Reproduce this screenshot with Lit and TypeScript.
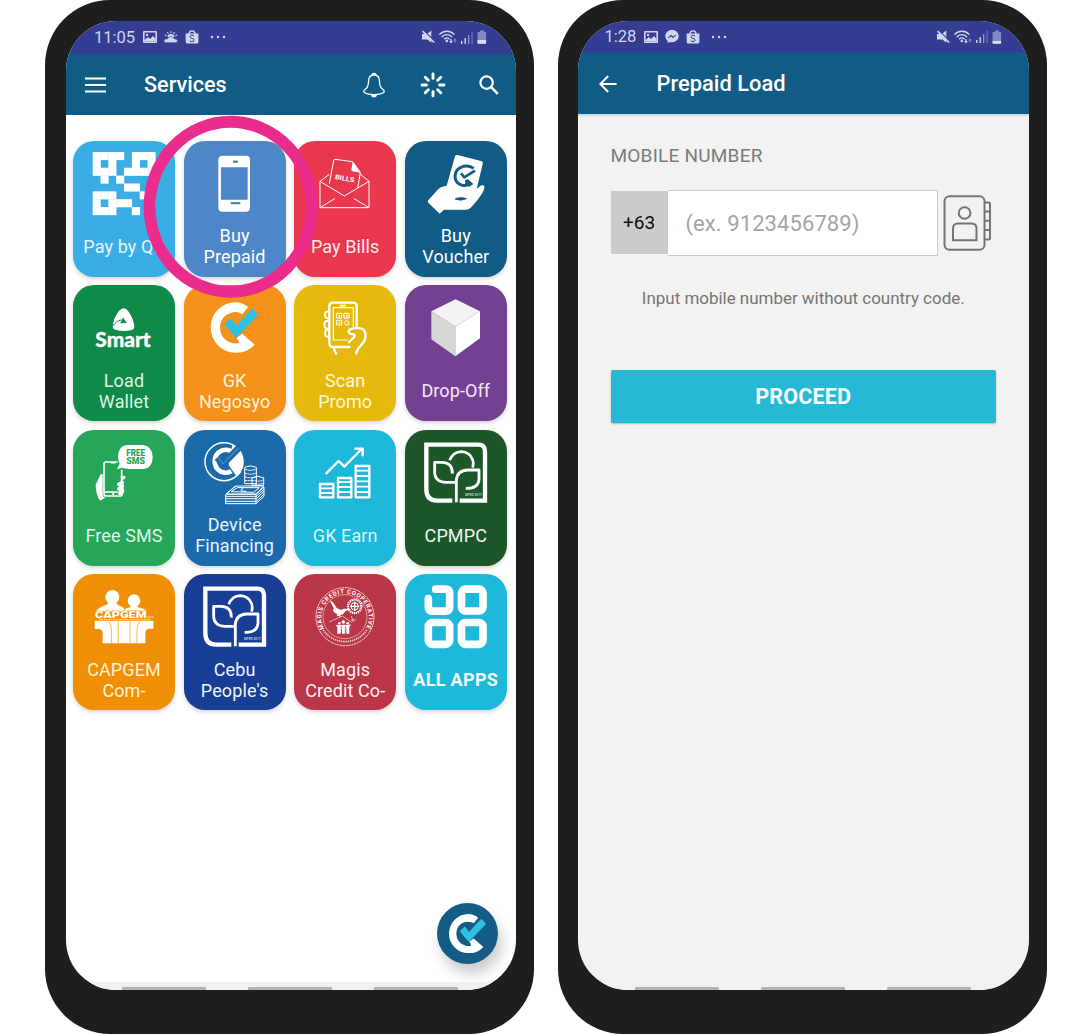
import { LitElement, html, css, svg } from "lit";
import { customElement, property } from "lit/decorators.js";

/* ---------- status bar glyphs ---------- */
const pictureIcon = html`<svg width="14" height="12" viewBox="0 0 14 12">
  <path fill="#d3d5ee" fill-rule="evenodd" d="M1 0h12q1 0 1 1v10q0 1-1 1H1q-1 0-1-1V1q0-1 1-1zM1.600 1.600v8.800h10.800V1.600z"/>
  <path fill="#d3d5ee" d="M1.500 10.500V9L5 6l2 2 3-3 2.500 2.800v2.700z"/><circle cx="4" cy="3.900" r="1.200" fill="#d3d5ee"/></svg>`;
const weatherIcon = html`<svg width="14" height="12" viewBox="0 0 14 12">
  <g stroke="#d3d5ee" stroke-width="1.100" stroke-linecap="round"><path d="M7 .6v1M3.600 1.500l.6 1M10.400 1.500l-.6 1M1.200 4l1 .6M12.800 4l-1 .6"/></g>
  <path d="M3.500 6a3.500 3 0 0 1 7 0" fill="#d3d5ee"/>
  <path fill="#d3d5ee" stroke="#343d92" stroke-width=".6" d="M1.700 11.700a1.900 1.900 0 0 1 .3-3.800h1.500a3.600 3.400 0 0 1 6.800-.1l1.600.2a1.900 1.900 0 0 1 .2 3.700z"/></svg>`;
const messengerIcon = html`<svg width="14" height="13" viewBox="0 0 14 13">
  <path fill="#d3d5ee" d="M7 0c3.900 0 6.700 2.700 6.700 6.100S10.900 12.200 7 12.200c-.7 0-1.400 0-2-.3L2.600 13v-2.200A5.800 5.800 0 0 1 .3 6.100C.3 2.700 3.100 0 7 0z"/>
  <path d="M3 8l2.900-3 2.200 1.700L11 5 8.200 7.900 6 6.300z" fill="#343d92" stroke="#343d92" stroke-width=".6"/></svg>`;
const bagIcon = html`<svg width="14" height="14" viewBox="0 0 14 14">
  <path d="M4 4a3 3.200 0 0 1 6 0" fill="none" stroke="#d3d5ee" stroke-width="1.300"/>
  <path fill="#d3d5ee" d="M.6 3.500h12.800V12q0 1.500-1.500 1.500H2.200Q.7 13.500.7 12z"/>
  <path d="M9 6.100Q8 5.200 6.800 5.200q-1.700 0-1.700 1.500T7 8.400t2 1.600-2 1.600q-1.200 0-2.200-.9" fill="none" stroke="#343d92" stroke-width="1"/></svg>`;
const dotsIcon = html`<svg width="16" height="4" viewBox="0 0 16 4"><g fill="#d3d5ee"><circle cx="2" cy="2" r="1.250"/><circle cx="8" cy="2" r="1.250"/><circle cx="14" cy="2" r="1.250"/></g></svg>`;
const muteIcon = html`<svg width="13" height="14" viewBox="0 0 13 14">
  <path fill="#d3d5ee" d="M0 4h3l3-1L9.300.4V12.800L5.500 9.500H0z"/><path d="M1.500.4l11.500 11" stroke="#343d92" stroke-width="1.300"/>
  <path d="M.6 1.200l11.600 11.300" stroke="#d3d5ee" stroke-width="1.700"/></svg>`;
const wifiIcon = html`<svg width="18" height="14" viewBox="0 0 18 14">
  <g fill="none" stroke="#d3d5ee" stroke-width="1.300" stroke-linecap="round"><path d="M.8 4.200a10 10 0 0 1 14.200 0M3.100 6.700a6.600 6.600 0 0 1 9.600 0M5.400 8.900a3.800 3.800 0 0 1 5 0"/></g>
  <circle cx="7.800" cy="10.900" r="1.300" fill="#d3d5ee"/>
  <path fill="#d3d5ee" d="M11.300 9h1.300v2h1.200L12 13.400 10.100 11h1.200z"/><path fill="#8186c2" d="M15.300 12.500h1.300v-2h1.200L16 8.100 14.100 10.500h1.200z"/></svg>`;
const signalIcon = html`<svg width="12" height="13" viewBox="0 0 12 13">
  <path fill="#d3d5ee" d="M0 10h1.400v3H0zM3.500 7h1.400v6H3.500z"/><path fill="#9095cb" d="M7 4h1.300v9H7z"/><path fill="#6f75b9" d="M10.500.5h1.200V13h-1.200z"/></svg>`;
const batteryIcon = (level: number) => html`<svg width="10" height="14" viewBox="0 0 10 14">
  <path fill="#8388c6" d="M3 .4h4v1.500h1.200q.9 0 .9.900V13q0 .8-.9.800H1.400q-.9 0-.9-.8V2.800q0-.9.900-.9H3z"/>
  <path fill="#dcddf2" d=${`M.5 ${14 - level}h8.600V13q0 .8-.9.800H1.400q-.9 0-.9-.8z`}/></svg>`;

/* ---------- header glyphs ---------- */
const menuIcon = html`<svg width="21" height="16" viewBox="0 0 21 16"><path stroke="#fff" stroke-width="2" d="M0 1.500h21M0 8h21M0 14.500h21"/></svg>`;
const bellIcon = html`<svg width="22" height="26" viewBox="0 0 22 26">
  <path d="M11 3C7 3 5.500 6 5.500 9.500c0 5-1.200 6.500-3.500 8-1.500 1-1.600 2.400-.2 3.300C3.500 21.900 7 22.600 11 22.600s7.500-.7 9.200-1.800c1.400-.9 1.300-2.300-.2-3.300-2.300-1.500-3.500-3-3.500-8C16.500 6 15 3 11 3z" fill="none" stroke="#fff" stroke-width="1.300"/>
  <path fill="#fff" d="M8.300 3.300Q8.300.8 11 .8t2.700 2.500Q11 2.400 8.300 3.300zM7.900 22.500h6.200Q13.800 25.400 11 25.400t-3.100-2.900z"/></svg>`;
const spinnerIcon = html`<svg class="spinner" width="26" height="26" viewBox="-13 -13 26 26"><g stroke="#fff" stroke-width="2.900" stroke-linecap="round">
  ${[0, 45, 90, 135, 180, 225, 270, 315].map((a) => svg`<path d="M0-6.600V-11" transform=${`rotate(${a})`}/>`)}</g></svg>`;
const searchIcon = html`<svg width="20" height="20" viewBox="0 0 20 20"><circle cx="7.600" cy="7.600" r="6.200" fill="none" stroke="#fff" stroke-width="2.200"/><path d="M12.200 12.200l6.600 6.600" stroke="#fff" stroke-width="2.600"/></svg>`;
const backIcon = html`<svg width="18" height="18" viewBox="0 0 18 18"><path d="M9.200 1L1.400 9l7.800 8M1.400 9H17.600" fill="none" stroke="#fff" stroke-width="2"/></svg>`;

/* ---------- service artwork, drawn at three units per pixel ---------- */
const art = (x: number, y: number, body: unknown) =>
  html`<svg class="art" width="102" height="80" viewBox=${`${x} ${y} 306 240`}>${body}</svg>`;

const qrCells = ["####.###", "#.#..#.#", "###.####", ".#.#....", "....##..", "###...#.", "#.###..#", "###..#.."];
const qrArt = art(40, 93, svg`<g fill="#fff">${qrCells.flatMap((row, r) =>
  [...row].map((c, i) => (c === "#" ? svg`<rect x=${99 + i * 23.5} y=${126 + r * 23.6} width="24.300" height="24.300"/>` : svg``)))}</g>`);
const phoneArt = art(372, 93, svg`<path fill="#fff" fill-rule="evenodd" d="M488 137h70q12 0 12 12v144q0 12-12 12h-70q-13 0-13-12V149q0-12 13-12zM483 172v97h80v-97z"/>
  <path stroke="#4d87c7" stroke-width="7" stroke-linecap="round" d="M522 155h9M515 279.500h23"/>`);
const billsArt = art(13, 33, svg`<g fill="none" stroke="#fff" stroke-width="3" stroke-linejoin="round">
  <path d="M119 133L91 154v79h147v-79l-28-23M91 154l73 44 74-44M91 233l44-27M238 233l-45-27M119 161l13-70q1-3 4-3l53 7 23 32-8 47"/></g>
  <path fill="#fff" d="M189 95l-4 25q0 3 4 4l23 4z"/>
  <text transform="translate(135 147) rotate(10)" font-family="Roboto, sans-serif" font-weight="700" font-size="20" textLength="59" lengthAdjust="spacingAndGlyphs" fill="#fff">BILLS</text>`);
const voucherArt = art(345, 33, svg`<path fill="#fff" d="M495 79q2-6 8-4l70 18q7 2 5 9l-18 75 8-7q4-5 11-5 6 2 4 10-2 8-7 16-15 23-34 42-6 6-15 6h-65l-13 12-34-33q-4-4 1-9l27-30q7-8 19-10l8-2z"/>
  <path d="M551 115Q538 105 520 109q-23 6-25 29 0 22 22 28 9 2 17-2" fill="none" stroke="#115c86" stroke-width="9"/>
  <path d="M513 130l10 12 32-20" fill="none" stroke="#115c86" stroke-width="8"/>
  <path d="M525 150l9-2 16 14-12 8-12-6z" fill="#115c86"/>
  <path d="M497 205q18-6 33 1-16 8-34 2z" fill="#115c86" stroke="#115c86" stroke-width="2"/>`);
const smartArt = art(40, 16, svg`<path fill="#fff" d="M192 86q7 0 15 10 16 22 17 47 0 7-8 8-24 6-49-1-8-2-8-8 2-26 18-47 8-9 15-9z"/>
  <path d="M160 139q9-16 25-18" fill="none" stroke="#108a49" stroke-width="3"/><path d="M190 115l10 14-17 1z" fill="#108a49" stroke="#108a49" stroke-width="2"/>
  <text x="107" y="203" font-family="Lato, Roboto, sans-serif" font-weight="900" font-size="60" textLength="166" lengthAdjust="spacingAndGlyphs" fill="#fff" stroke="#fff" stroke-width="1" stroke-linejoin="round">Smart</text>`);
const checkLogo = svg`<path fill="#fff" d="M564 82l-17 22Q533 94 514 99q-32 9-34 43 1 38 36 48 12 3 22-1l-8-15 17-12 37 33Q562 219 529 219q-36-1-57-24-20-22-20-53 1-34 25-55 20-18 49-19 21 0 38 14z"/>
  <path fill="#30bfe1" d="M493 134l17-16q3-2 6 1l13 18 43-47q4-4 8-1l12 15q2 3-1 6l-60 62q-4 3-7-1z"/>`;
const negosyoArt = art(372, 16, checkLogo);
const scanArt = art(13, 16, svg`<g fill="none" stroke="#fff" stroke-width="7" stroke-linecap="round" stroke-linejoin="round">
  <path d="M180 202h-50q-11 0-11-11V79q0-10 11-10h60q11 0 11 10v62M134 204q-2 3 0 6l5 12"/>
  <path d="M131 181V84h60v57M131 181h42" stroke-width="3.500"/>
  <path d="M118 96h-5q-7 0-7 9t7 11h5M118 124h-7q-7 0-7 11t7 11h7M118 151h-5q-7 0-7 10t7 10h5" stroke-width="5.500"/>
  <path d="M199 221q4-15 17-27 14-14 11-33-3-14-15-15-17-2-30 3-6 3-5 9 3 6 10 5l7 2q2 8-6 12l-10 11"/>
  <path d="M142 101h14v14h-14zM164 101h14v14h-14zM142 122h14v14h-14z" stroke-width="3" stroke-linejoin="miter"/></g>
  <path fill="none" stroke="#fff" stroke-width="5" d="M149 106v5M171 106v5M149 127v5M150 78h18"/><path d="M163 129l6-6 8 3v9l-8 1z" fill="none" stroke="#fff" stroke-width="3"/>`);
const boxArt = art(345, 16, svg`<path fill="#f4f2f3" d="M497 59l73 36-74 46-72-46z"/><path fill="#d8d7d8" d="M424 95l72 46v89l-72-51z"/><path fill="#fff" d="M496 141l74-46v81l-74 54z"/>`);
const smsArt = art(40, 15, svg`<path fill="#fff" d="M201 60h48q29 2 30 36-1 35-30 36h-39q-16-1-22-4l-16 5 8-17q-5-10-5-22 2-32 26-34z"/>
  <g font-family="Roboto, sans-serif" font-weight="900" font-size="25" fill="#25a659"><text x="200" y="94" textLength="56" lengthAdjust="spacingAndGlyphs">FREE</text>
  <text x="200" y="118" textLength="56" lengthAdjust="spacingAndGlyphs">SMS</text></g>
  <path fill="none" stroke="#fff" stroke-width="5" stroke-linejoin="round" d="M174 111h-35q-6 0-6 5v91q0 6 6 6h44q4 0 4-5M186 134v22M136 201h38M154 113h13"/>
  <path fill="#fff" d="M129 147v63q1 7 8 8l-15 9q-8-7-8-15-5-8-6-33l15-31zM183 153h7q7-3 8 4-1 7-8 7v3q4 2 3 7l-2 3q4 4 1 9v7q4 3 1 8l-4 8-11 2-4-8 5-5q-7-1-7-6 0-6 7-7-7-2-7-7 0-6 8-7l3-4z"/>
  <circle cx="161" cy="207" r="3.500" fill="#fff"/>`);
const financeArt = art(372, 15, svg`<path fill="#fff" d="M517 60Q548 75 550 108q0 20-16 40l-28-30z"/>
  <circle cx="492" cy="110" r="57" fill="none" stroke="#fff" stroke-width="4.500"/>
  <path d="M521 84Q505 69 485 77q-22 10-21 35 4 27 30 31 12 1 20-4" fill="none" stroke="#fff" stroke-width="14"/>
  <path d="M506 120l8-7 29 30-14 10z" fill="#fff"/>
  <path d="M472 98l16 20 50-51" fill="none" stroke="#1d6aab" stroke-width="20"/>
  <path d="M474 97l15 19 46-46" fill="none" stroke="#fff" stroke-width="3" opacity=".35"/>
  <g fill="#1d6aab" stroke="#fff" stroke-width="3"><path d="M554 127q17-9 35 0v49h-35zM576 158q17-8 35 0v23h-35z"/>
  <path d="M554 132q17 8 35 0M554 144q17 7 35 0M554 155q17 7 35 0M554 167h22M576 165q17 7 35 0M576 174q17 7 35 0" fill="none" stroke-dasharray="7 1.500"/>
  <path d="M498 207l30-24h83l-23 24z"/></g>
  <path d="M499 208h89v28h-91v-28l29-25M588 208l24-22v28l-24 22M498 214h91l23-22M498 221h91l23-22M498 229h91l23-22M513 200l19-12h66l-17 14zM538 187q18 2 6 7-6 5 14 5" fill="none" stroke="#fff" stroke-width="3"/>`);
const earnArt = art(13, 15, svg`<g fill="none" stroke="#fff" stroke-width="7" stroke-linecap="round" stroke-linejoin="round">
  <path d="M110 145l37-37 17 17 52-53M197 71h22v20"/>
  <path d="M91 177h40v40H91zM145 159h40v58h-40zM198 123h41v94h-41z"/>
  <path stroke-width="5.500" d="M92 190h38M92 204h38M146 171h38M146 186h38M146 201h38M199 137h39M199 153h39M199 169h39M199 185h39M199 201h39"/></g>`);
const cooperativeArt = html`<svg class="art" width="102" height="80" viewBox="0 0 306 240"><g fill="none" stroke="#fff">
  <path stroke-width="13" d="M142 212H96Q64 212 64 178V44H220Q240 44 240 64V212H164"/>
  <path stroke-width="8" d="M134 91Q144 66 169 65q25 1 34 24 4 11 0 24"/>
  <path stroke-width="8.500" stroke-linejoin="round" d="M142 131q1-33-30-34H89v32q2 27 34 28h30M154 217V152q2-31 34-32h34v28q-2 28-40 27"/></g>
  <text x="180" y="198" font-family="Roboto, sans-serif" font-weight="700" font-size="9" textLength="50" fill="#fff" opacity=".7">MPRD 2017</text></svg>`;
const capgemArt = art(40, 20, svg`<g fill="#fff"><circle cx="158" cy="89" r="21"/><circle cx="223" cy="100" r="19"/>
  <path d="M109 132q9-14 31-19l7-7h22l7 8q15 4 20 15l-6 4zM191 132l9-9 12-3 3-5h17l3 5q20 3 27 12z"/>
  <path d="M105 160h176v24h-11q-13 0-13 13v31H129v-28q0-15-13-15h-11z"/></g>
  <path d="M147 163q8 7 8 23v42M176 162v66M211 162v66M240 163q-8 7-8 23v42M108 187h12M280 187h-12" stroke="#f18f04" stroke-width="2" fill="none"/>
  <path d="M118 156h155" stroke="#fff" stroke-width="2.500" stroke-dasharray="5 2"/>
  <text x="106" y="152" font-family="Roboto, sans-serif" font-weight="900" font-size="25" textLength="155" lengthAdjust="spacingAndGlyphs" fill="#fff" stroke="#f18f04" stroke-width="2.500" paint-order="stroke">CAPGEM</text><path d="M264 149h17" stroke="#fff" stroke-width="3" stroke-dasharray="5 1.500"/>`);
const magisArt = art(13, 20, svg`<defs><path id="seal-top" d="M104 184A71 71 0 1 1 228 184"/></defs>
  <g fill="none" stroke="#fff"><circle cx="166" cy="148" r="87" stroke-width="2.500" stroke-dasharray="7 1.500"/><circle cx="166" cy="148" r="66" stroke-width="1.500"/></g>
  <text font-family="Roboto, sans-serif" font-weight="700" font-size="18" fill="#fff"><textPath href="#seal-top" textLength="292">MAGIS CREDIT COOPERATIVE</textPath></text>
  <path d="M101 188a78 78 0 0 0 130 0" fill="none" stroke="#fff" stroke-width="5" stroke-dasharray="4 2.500" opacity=".8"/>
  <path fill="#fff" d="M120 98q12 6 21 24l13 6 8-4 21 1-15 6-7 9-10 4 4 6-7-4-7 1 2-6-8-5q-6-5-5-12l4 3z"/>
  <path d="M118 164l40-18 28 19M184 158h15M185 146l6 18" stroke="#fff" stroke-width="1.800" fill="none"/>
  <g fill="none" stroke="#fff"><circle cx="195" cy="117" r="20" stroke-width="7" stroke-dasharray="4 2"/><circle cx="195" cy="117" r="11" stroke-width="3"/><path stroke-width="4" d="M181 117h28M195 103v28"/></g>
  <g fill="#fff"><circle cx="149" cy="168" r="4"/><circle cx="161" cy="164" r="5"/><circle cx="174" cy="168" r="4"/><path d="M138 172l10 2 13-2 14 1 9-2-5 8v20h-9v-18l-4 18h-9v-18l-4 18h-10v-19z"/></g>
  <path d="M155 176v24M167 176v24" stroke="#bb3646" stroke-width="2"/>`);
const allAppsArt = art(345, 20, svg`<g fill="none" stroke="#fff" stroke-width="23">
  <path d="M437 65.500h29q13 0 13 13v40q0 13-13 13h-38q-13 0-13-13V94" stroke-linecap="round"/>
  <rect x="514.500" y="65.500" width="64.500" height="65.500" rx="12"/><rect x="415" y="165.500" width="64" height="65.500" rx="12"/><rect x="514.500" y="165.500" width="64.500" height="65.500" rx="12"/></g>`);

interface Service { label: string; color: string; ink?: string; strong?: boolean; icon: unknown; }
const services: Service[] = [
  { label: "Pay by QR", color: "#39ade4", ink: "#e4f6ff", icon: qrArt },
  { label: "Buy\nPrepaid", color: "#4d87c7", icon: phoneArt },
  { label: "Pay Bills", color: "#e9384e", ink: "#ffeaec", icon: billsArt },
  { label: "Buy\nVoucher", color: "#115c86", icon: voucherArt },
  { label: "Load\nWallet", color: "#108a49", ink: "#dff5e6", icon: smartArt },
  { label: "GK\nNegosyo", color: "#f4911b", ink: "#fff2d8", icon: negosyoArt },
  { label: "Scan\nPromo", color: "#e6b90e", ink: "#fff8dc", icon: scanArt },
  { label: "Drop-Off", color: "#744192", ink: "#fae6fa", icon: boxArt },
  { label: "Free SMS", color: "#25a659", ink: "#dff5e6", icon: smsArt },
  { label: "Device\nFinancing", color: "#1d6aab", ink: "#e8f4ff", icon: financeArt },
  { label: "GK Earn", color: "#1eb8da", ink: "#dcf7fd", icon: earnArt },
  { label: "CPMPC", color: "#1c5629", ink: "#f0f7f0", icon: cooperativeArt },
  { label: "CAPGEM\nCom-", color: "#f18f04", ink: "#fff1d6", icon: capgemArt },
  { label: "Cebu\nPeople's", color: "#183f95", ink: "#f0f5ff", icon: cooperativeArt },
  { label: "Magis\nCredit Co-", color: "#bb3646", ink: "#ffeef0", icon: magisArt },
  { label: "ALL APPS", color: "#1eb8da", ink: "#eefcff", strong: true, icon: allAppsArt },
];

@customElement("status-bar")
class StatusBar extends LitElement {
  @property() time = "";
  @property() app = "weather";
  @property({ type: Number }) level = 4;
  static styles = css`
    :host { display: flex; align-items: center; box-sizing: border-box; padding: 0 29px 0 28.500px; background: #343d92; color: #d3d5ee; font-size: 16.500px; }
    .time { margin-right: 8px; }
    .left { display: flex; align-items: center; gap: 7px; }
    .left svg:last-child { margin-left: 4px; }
    .right { display: flex; align-items: center; gap: 4px; margin-left: auto; }
    svg { display: block; }
  `;
  render() {
    return html`<span class="time">${this.time}</span>
      <div class="left">${pictureIcon}${this.app === "weather" ? weatherIcon : messengerIcon}${bagIcon}${dotsIcon}</div>
      <div class="right">${muteIcon}${wifiIcon}${signalIcon}${batteryIcon(this.level)}</div>`;
  }
}

@customElement("service-tile")
class ServiceTile extends LitElement {
  @property({ attribute: false }) service!: Service;
  static styles = css`
    :host { display: block; }
    .tile { height: 136px; border-radius: 21px; box-shadow: 0 2px 4px rgba(0, 0, 0, .17); display: flex; flex-direction: column; overflow: hidden; }
    .art { display: block; flex: none; }
    .label { flex: none; height: 51px; display: flex; align-items: center; justify-content: center; white-space: pre; text-align: center; font-size: 18px; line-height: 21px; letter-spacing: .1px; }
    .strong { font-weight: 700; letter-spacing: .3px; }
  `;
  render() {
    const s = this.service;
    return html`<div class="tile" style=${`background:${s.color};color:${s.ink ?? "#fff"}`}>${s.icon}<div class=${s.strong ? "label strong" : "label"}>${s.label}</div></div>`;
  }
}

@customElement("app-root")
class AppRoot extends LitElement {
  static styles = css`
    :host { display: flex; box-sizing: border-box; width: 1080px; height: 1035px; padding-left: 45px; gap: 23.500px; background: #fff; overflow: hidden; font-family: Roboto, sans-serif; }
    svg { display: block; }
    .phone { position: relative; flex: none; box-sizing: border-box; width: 489px; height: 1034px; padding: 21px 18px 44px 20.500px; background: #1e1e1c; border-radius: 65px; }
    .screen { position: relative; box-sizing: border-box; height: 969px; border-radius: 50px; overflow: hidden; background: #fff; display: flex; flex-direction: column; }
    .form-screen { background: #f2f2f1; }
    status-bar { height: 32.500px; flex: none; }
    .form-screen status-bar { height: 31.500px; padding: 0 27px 0 26.500px; }
    .header { flex: none; display: flex; align-items: center; box-sizing: border-box; height: 61px; padding: 1px 17px 0 19.500px; background: #115c86; color: #fff; }
    .title { font-size: 21.600px; font-weight: 500; }
    .header .title { margin-left: 38px; }
    .form-screen .header { box-shadow: 0 1px 3px rgba(60, 140, 170, .4); height: 61.500px; padding-left: 21px; }
    .form-screen .title { margin-left: 39.500px; font-size: 21.900px; }
    .actions { display: flex; align-items: center; gap: 33px; margin-left: auto; }
    .spinner { margin-left: 2px; }
    .grid { display: grid; grid-template-columns: repeat(4, 102px); column-gap: 8.600px; row-gap: 8.600px; padding: 26px 0 0 7.500px; }
    .ring { position: absolute; left: 98px; top: 115px; }
    .fab { position: absolute; left: 371.500px; top: 882px; width: 61px; height: 61px; border-radius: 50%; background: #145c84; box-shadow: 4px 10px 13px rgba(0, 0, 0, .2); display: flex; align-items: center; justify-content: center; }
    .nav { margin-top: auto; height: 8px; display: flex; align-items: flex-end; gap: 42px; padding-left: 56.500px; background: #f1f1ef; }
    .nav span { width: 84px; height: 3px; border-radius: 1px 1px 0 0; background: #b3b3b1; }
    .form { display: flex; flex-direction: column; padding: 31px 32.500px 0; }
    .caption { color: #7b7b7b; font-size: 19px; line-height: 22px; letter-spacing: .22px; }
    .row { display: flex; align-items: center; margin-top: 23px; height: 66px; }
    .prefix { width: 57px; height: 63px; margin-bottom: 1px; background: #cbcbcb; display: flex; align-items: center; justify-content: center; font-size: 19px; color: #0c0c0c; }
    .field { box-sizing: border-box; width: 270px; height: 66px; border: 1.500px solid #c9c9cc; border-left-width: 0; background: #fff; display: flex; align-items: center; padding-left: 18px; font-size: 22px; letter-spacing: .08px; color: #a5a5a5; }
    .contact { margin-left: 5px; }
    .hint { margin-top: 31px; text-align: center; font-size: 17px; line-height: 22px; letter-spacing: -.03px; color: #757575; }
    .proceed { margin-top: 61px; height: 52.500px; display: flex; align-items: center; justify-content: center; border-radius: 2px; background: #27b8d6; box-shadow: 0 1px 2px rgba(0, 0, 0, .25); color: #f5fdff; font-size: 21.600px; font-weight: 700; letter-spacing: .1px; }
  `;
  render() {
    const nav = html`<div class="nav"><span></span><span></span><span></span></div>`;
    return html`
      <div class="phone">
        <div class="screen">
          <status-bar time="11:05" app="weather"></status-bar>
          <div class="header">${menuIcon}<div class="title">Services</div><div class="actions">${bellIcon}${spinnerIcon}${searchIcon}</div></div>
          <div class="grid">${services.map((s) => html`<service-tile .service=${s}></service-tile>`)}</div>
          ${nav}
          <div class="fab"><svg width="36.700" height="39.300" viewBox="452 68 141 151">${checkLogo}</svg></div>
        </div>
        <svg class="ring" width="176" height="184" viewBox="0 0 176 184"><ellipse cx="87.600" cy="91.700" rx="81" ry="85" fill="none" stroke="#ea2c8c" stroke-width="12"/></svg>
      </div>
      <div class="phone">
        <div class="screen form-screen">
          <status-bar time="1:28" app="messenger" .level=${3}></status-bar>
          <div class="header">${backIcon}<div class="title">Prepaid Load</div></div>
          <div class="form">
            <div class="caption">MOBILE NUMBER</div>
            <div class="row"><div class="prefix">+63</div><div class="field">(ex. 9123456789)</div>
              <svg class="contact" width="49" height="56" viewBox="0 0 49 56"><g fill="none" stroke="#747474" stroke-width="2">
                <rect x="1.500" y="1.200" width="40" height="53.500" rx="5"/><circle cx="21.600" cy="18" r="5.800"/>
                <path d="M10 45.300V33.500q0-5 5-5h13.500q5 0 5 5v11.800zM41.500 7.500h4q1.500 0 1.500 1.500v34q0 1.500-1.500 1.500h-4M41.500 16.500H47M41.500 25.800H47M41.500 35H47"/></g></svg></div>
            <div class="hint">Input mobile number without country code.</div>
            <div class="proceed">PROCEED</div>
          </div>
          ${nav}
        </div>
      </div>`;
  }
}
